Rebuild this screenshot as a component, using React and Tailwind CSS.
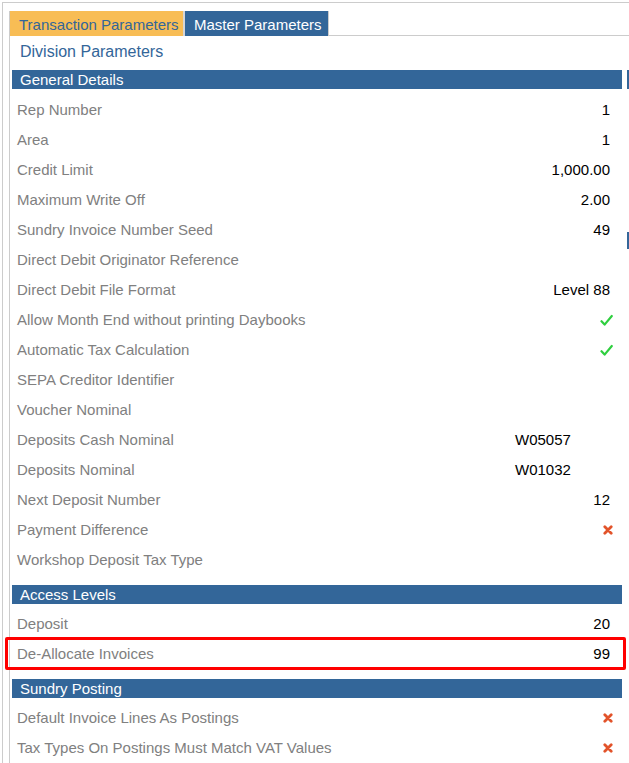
import React from 'react';

const BLUE = 'bg-[#336699]';

const Tick = () => (
    <svg width="13" height="13" viewBox="0 0 13 13" className="inline-block">
        <path d="M1.5 7.2 L4.6 10.6 L11.8 2" fill="none" stroke="#2fcf3f" strokeWidth="2.2" strokeLinecap="round" strokeLinejoin="round" />
    </svg>
);

const Cross = () => (
    <svg width="10" height="10" viewBox="0 0 10 10" className="inline-block">
        <path d="M1.8 1.8 L8.2 8.2 M8.2 1.8 L1.8 8.2" fill="none" stroke="#e2532a" strokeWidth="2.8" strokeLinecap="round" />
    </svg>
);

const sections = [
    {
        title: 'General Details',
        rows: [
            { label: 'Rep Number', value: '1' },
            { label: 'Area', value: '1' },
            { label: 'Credit Limit', value: '1,000.00' },
            { label: 'Maximum Write Off', value: '2.00' },
            { label: 'Sundry Invoice Number Seed', value: '49' },
            { label: 'Direct Debit Originator Reference', value: '' },
            { label: 'Direct Debit File Format', value: 'Level 88' },
            { label: 'Allow Month End without printing Daybooks', flag: true },
            { label: 'Automatic Tax Calculation', flag: true },
            { label: 'SEPA Creditor Identifier', value: '' },
            { label: 'Voucher Nominal', value: '' },
            { label: 'Deposits Cash Nominal', value: 'W05057', nominal: true },
            { label: 'Deposits Nominal', value: 'W01032', nominal: true },
            { label: 'Next Deposit Number', value: '12' },
            { label: 'Payment Difference', flag: false },
            { label: 'Workshop Deposit Tax Type', value: '' },
        ],
    },
    {
        title: 'Access Levels',
        rows: [
            { label: 'Deposit', value: '20' },
            { label: 'De-Allocate Invoices', value: '99', marked: true },
        ],
    },
    {
        title: 'Sundry Posting',
        rows: [
            { label: 'Default Invoice Lines As Postings', flag: false },
            { label: 'Tax Types On Postings Must Match VAT Values', flag: false },
        ],
    },
];

const Row = ({ row }) => (
    <div className="relative flex h-[30px] items-center">
        <div className="flex-1 pl-[5px] text-[#808080]">{row.label}</div>
        {row.flag !== undefined ? (
            <div className="flex w-[40px] justify-end pr-[9px]">{row.flag ? <Tick /> : <Cross />}</div>
        ) : (
            <div className={`w-[107px] pr-[12px] text-black ${row.nominal ? 'text-left' : 'text-right'}`}>{row.value}</div>
        )}
        {row.marked && (
            <div className="pointer-events-none absolute -top-[2px] -bottom-[1px] -left-[7px] -right-[4px] rounded-[2px] border-[3px] border-[#ff0000]" />
        )}
    </div>
);

export default function App() {
    return (
        <div className="relative h-[763px] w-[629px] overflow-hidden bg-white font-['Liberation_Sans',Arial,sans-serif] text-[15px]">
            <div className="mt-[2px] ml-[2px] h-full border-t border-l border-[#cccccc] pt-[8px] pl-[6px]">
                <div className="h-full border-l border-[#cccccc]">
                    {/* tab strip */}
                    <div className="flex h-[25px]">
                        <div className="flex w-[175px] items-center border-r-2 border-[#d6d6d6] bg-[#f8bd55] pt-[3px] pl-[9px] text-[#336699]">
                            Transaction Parameters
                        </div>
                        <div className={`flex w-[143px] items-center ${BLUE} pt-[3px] pl-[9px] text-white`}>Master Parameters</div>
                        <div className="flex-1 border-l border-b border-[#cccccc]" />
                    </div>

                    <div className="h-[34px] pt-[4px] pl-[10px] text-[16px] text-[#336699]">Division Parameters</div>

                    <div className="pl-[2px] pr-[7px]">
                        {sections.map((s, i) => (
                            <div key={s.title} className={i === 0 ? '' : 'mt-[10px]'}>
                                <div className={`h-[19px] ${BLUE} px-[8px] leading-[19px] text-white`}>{s.title}</div>
                                <div className={i === 0 ? 'pt-[6px]' : 'pt-[5px]'}>
                                    {s.rows.map(r => <Row key={r.label} row={r} />)}
                                </div>
                            </div>
                        ))}
                    </div>
                </div>
            </div>

            {/* scrollbar remnants on the right edge */}
            <div className={`absolute top-[70px] right-0 h-[19px] w-[2px] ${BLUE}`} />
            <div className={`absolute top-[232px] right-0 h-[17px] w-[2px] ${BLUE}`} />
        </div>
    );
}
